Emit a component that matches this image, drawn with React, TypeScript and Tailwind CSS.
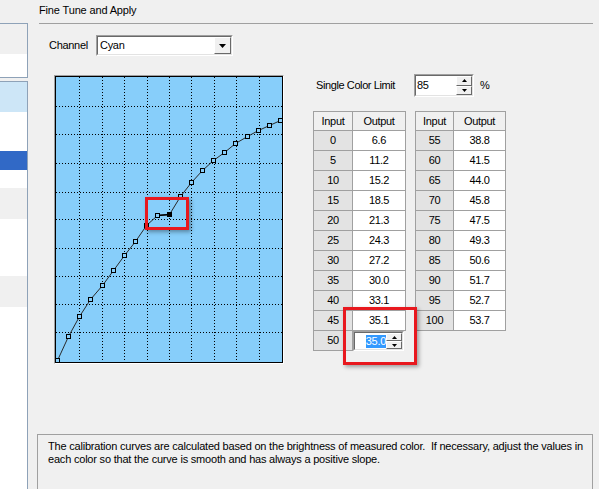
import React from "react";

const leftRows = [
  { h: "h-[30px]", bg: "bg-[#cde6f7]" },
  { h: "h-[39px]", bg: "bg-white" },
  { h: "h-[19px]", bg: "bg-[#3169c6]" },
  { h: "h-[18px]", bg: "bg-white" },
  { h: "h-[31px]", bg: "bg-[#f0f0f0]" },
  { h: "h-[57px]", bg: "bg-white" },
  { h: "h-[31px]", bg: "bg-[#f0f0f0]" },
];

const tableA = [
  ["0", "6.6"],
  ["5", "11.2"],
  ["10", "15.2"],
  ["15", "18.5"],
  ["20", "21.3"],
  ["25", "24.3"],
  ["30", "27.2"],
  ["35", "30.0"],
  ["40", "33.1"],
  ["45", "35.1"],
];

const tableB = [
  ["55", "38.8"],
  ["60", "41.5"],
  ["65", "44.0"],
  ["70", "45.8"],
  ["75", "47.5"],
  ["80", "49.3"],
  ["85", "50.6"],
  ["90", "51.7"],
  ["95", "52.7"],
  ["100", "53.7"],
];

// measured curve points (page coordinates)
const curve: [number, number][] = [
  [57, 360], [68, 336], [79, 316], [90, 299], [102, 285], [113, 270], [124, 255],
  [135, 241], [146, 225], [157, 215], [169, 214], [180, 196], [191, 182], [202, 170],
  [213, 160], [224, 152], [235, 143], [247, 136], [258, 130], [269, 125], [280, 120],
];

const gridX = [79, 102, 124, 147, 169, 191, 214, 236, 259];
const gridY = [106, 134, 163, 192, 219, 248, 276, 304, 332];

function SpinButtons({ className }: { className: string }) {
  return (
    <div className={`flex flex-col w-[16px] shrink-0 ${className}`}>
      {["up", "down"].map((dir) => (
        <div
          key={dir}
          className="flex-1 flex items-center justify-center bg-[#f0f0f0] border-t border-l border-white border-r border-b border-r-[#696969] border-b-[#696969]"
        >
          <svg width="5" height="3" viewBox="0 0 5 3">
            {dir === "up" ? <path d="M2.5 0 L5 3 L0 3 Z" fill="#000" /> : <path d="M0 0 L5 0 L2.5 3 Z" fill="#000" />}
          </svg>
        </div>
      ))}
    </div>
  );
}

function Sunken({ className, children }: { className: string; children: React.ReactNode }) {
  return (
    <div className={`border border-[#a0a0a0] border-r-white border-b-white ${className}`}>
      <div className="w-full h-full border border-[#696969] border-r-[#e3e3e3] border-b-[#e3e3e3] bg-white flex">
        {children}
      </div>
    </div>
  );
}

function Table({ rows, inW, outW, editing }: { rows: string[][]; inW: string; outW: string; editing?: boolean }) {
  return (
    <div className="flex flex-col border-l border-[#a0a0a0]">
      <div className="flex h-[20px] border-t border-[#a0a0a0]">
        <div className={`${inW} border-r border-b border-[#a0a0a0] bg-[#f0f0f0] flex items-center justify-center`}>Input</div>
        <div className={`${outW} border-r border-b border-[#a0a0a0] bg-[#f0f0f0] flex items-center justify-center`}>Output</div>
      </div>
      {rows.map(([i, o]) => (
        <div key={i} className="flex h-[20px]">
          <div className={`${inW} border-r border-b border-[#a0a0a0] bg-[#e3e3e3] flex items-center justify-center`}>{i}</div>
          <div className={`${outW} border-r border-b border-[#a0a0a0] bg-white flex items-center justify-center`}>{o}</div>
        </div>
      ))}
      {editing && (
        <div className="flex h-[20px]">
          <div className={`${inW} border-r border-b border-[#a0a0a0] bg-[#e3e3e3] flex items-center justify-center`}>50</div>
          <Sunken className="w-[51px] h-[20px]">
            <div className="flex-1 flex items-center justify-end overflow-hidden">
              <span className="bg-[#3399ff] text-white leading-[13px] whitespace-nowrap">35.0</span>
            </div>
            <SpinButtons className="h-full" />
          </Sunken>
        </div>
      )}
    </div>
  );
}

function Graph() {
  return (
    <div className="w-[230px] h-[289px] border border-[#a0a0a0] border-r-white border-b-white">
      <div className="w-full h-full border border-black bg-[#87cefa]">
        <svg width="226" height="285" viewBox="56 77 226 285" className="block overflow-visible">
          {gridX.map((x) => (
            <line key={`x${x}`} x1={x + 0.5} y1={77} x2={x + 0.5} y2={362} stroke="#000" strokeDasharray="1 2" />
          ))}
          {gridY.map((y) => (
            <line key={`y${y}`} x1={56} y1={y + 0.5} x2={282} y2={y + 0.5} stroke="#000" strokeDasharray="1 2" />
          ))}
          <polyline
            points={curve.map(([x, y]) => `${x + 0.5},${y + 0.5}`).join(" ")}
            fill="none"
            stroke="#2a2a2a"
            strokeWidth="1"
          />
          <line x1={157.5} y1={215.5} x2={169.5} y2={214.5} stroke="#000" strokeWidth="1.4" />
          {curve.map(([x, y], i) =>
            i === 10 ? (
              <rect key={i} x={x - 2} y={y - 2} width="5" height="5" fill="#000" />
            ) : (
              <rect key={i} x={x - 1.5} y={y - 1.5} width="4" height="4" fill="#87cefa" stroke="#000" strokeWidth="1" />
            )
          )}
        </svg>
      </div>
    </div>
  );
}

export default function App() {
  return (
    <div className="relative w-[599px] h-[489px] overflow-hidden bg-[#f0f0f0] flex text-black text-[11px] leading-[13px] tracking-[-0.3px] font-['Liberation_Sans',Arial,sans-serif]">
      {/* left tree panel */}
      <div className="w-[28px] shrink-0 flex flex-col pt-[23px] gap-[3px]">
        <div className="h-[55px] border-y border-r border-[#8ea2b8] flex flex-col">
          <div className="h-[30px] bg-[#f0f0f0]" />
          <div className="flex-1 bg-white" />
        </div>
        <div className="flex-1 border-t border-r border-[#8ea2b8] bg-white flex flex-col">
          {leftRows.map((r, i) => (
            <div key={i} className={`${r.h} ${r.bg}`} />
          ))}
        </div>
      </div>

      {/* main */}
      <div className="flex-1 flex flex-col">
        <div className="h-[23px] pl-[11px] pt-[4px] tracking-[-0.15px]">Fine Tune and Apply</div>
        <div className="ml-[11px] mr-[6px] h-px bg-[#a0a0a0]" />

        <div className="flex items-center h-[21px] mt-[11px] pl-[21px]">
          <span className="w-[47px]">Channel</span>
          <Sunken className="w-[137px] h-[21px]">
            <div className="flex-1 flex items-center pl-[2px]">Cyan</div>
            <div className="w-[17px] h-full flex items-center justify-center bg-[#f0f0f0] border-t border-l border-white border-r border-b border-r-[#696969] border-b-[#696969]">
              <svg width="7" height="4" viewBox="0 0 7 4">
                <path d="M0 0 L7 0 L3.5 4 Z" fill="#000" />
              </svg>
            </div>
          </Sunken>
        </div>

        <div className="flex items-start mt-[18px] pl-[26px]">
          <div className="mt-[1px]">
            <Graph />
          </div>
          <div className="ml-[29px] flex flex-col">
            <div className="flex items-center h-[23px]">
              <span className="w-[101px] pl-[3px] tracking-[-0.4px]">Single Color Limit</span>
              <Sunken className="w-[60px] h-[23px]">
                <div className="flex-1 flex items-center pl-[1px]">85</div>
                <SpinButtons className="h-full" />
              </Sunken>
              <span className="ml-[6px]">%</span>
            </div>
            <div className="flex gap-[9px] mt-[14px]">
              <Table rows={tableA} inW="w-[39px]" outW="w-[53px]" editing />
              <Table rows={tableB} inW="w-[38px]" outW="w-[52px]" />
            </div>
          </div>
        </div>

        <div className="mt-auto ml-[9px] mr-[6px] h-[55px] border-t border-x border-[#a0a0a0] pl-[10px] pt-[5px] whitespace-nowrap tracking-[-0.2px]">
          The calibration curves are calculated based on the brightness of measured color.&nbsp; If necessary, adjust the values in
          <br />
          each color so that the curve is smooth and has always a positive slope.
        </div>
      </div>

      {/* highlight boxes */}
      <div className="absolute left-[145px] top-[197px] w-[44px] h-[33px] border-[3px] border-[#e8181e] shadow-[2px_2px_4px_rgba(0,0,0,0.35)]" />
      <div className="absolute left-[343px] top-[307px] w-[74px] h-[58px] border-[3px] border-[#e8181e] shadow-[2px_2px_4px_rgba(0,0,0,0.35)]" />
    </div>
  );
}
